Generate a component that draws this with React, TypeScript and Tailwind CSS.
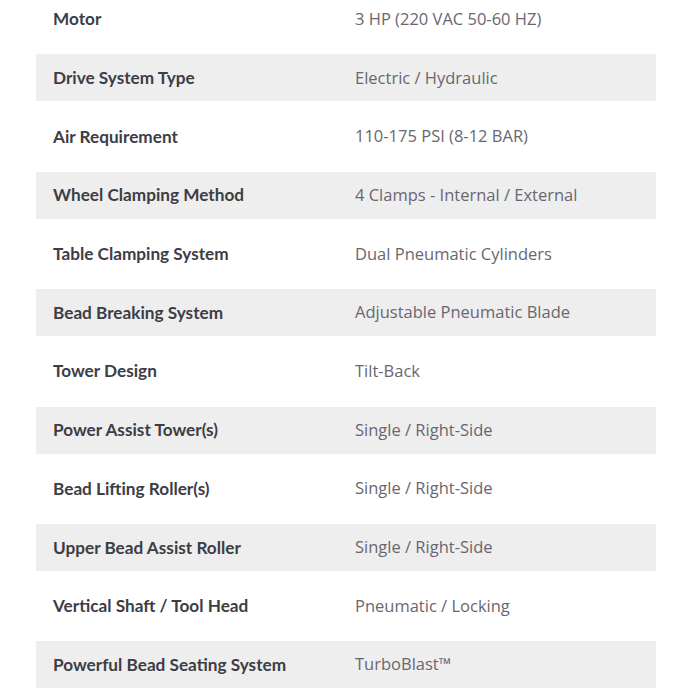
const specs = [
  ['Motor', '3 HP (220 VAC 50-60 HZ)'],
  ['Drive System Type', 'Electric / Hydraulic'],
  ['Air Requirement', '110-175 PSI (8-12 BAR)'],
  ['Wheel Clamping Method', '4 Clamps - Internal / External'],
  ['Table Clamping System', 'Dual Pneumatic Cylinders'],
  ['Bead Breaking System', 'Adjustable Pneumatic Blade'],
  ['Tower Design', 'Tilt-Back'],
  ['Power Assist Tower(s)', 'Single / Right-Side'],
  ['Bead Lifting Roller(s)', 'Single / Right-Side'],
  ['Upper Bead Assist Roller', 'Single / Right-Side'],
  ['Vertical Shaft / Tool Head', 'Pneumatic / Locking'],
  ['Powerful Bead Seating System', 'TurboBlast™'],
];

export default function App() {
  return (
    <div className="h-[700px] w-[700px] overflow-hidden bg-white">
      <div className="ml-9 mt-[-16px] w-[620px]">
        {specs.map(([label, value], i) => (
          <div
            key={label}
            className={
              i % 2 === 1
                ? 'flex h-[47px] items-center bg-[#eeeeee]'
                : 'flex h-[70.4px] items-center bg-white'
            }
          >
            <div className="w-[319px] pl-[17px] font-['Lato',sans-serif] text-[17.2px] font-bold text-[#3d3d45]">
              {label}
            </div>
            <div className="font-['Open_Sans',sans-serif] text-[16.5px] text-[#6a6670]">
              {value}
            </div>
          </div>
        ))}
      </div>
    </div>
  );
}
